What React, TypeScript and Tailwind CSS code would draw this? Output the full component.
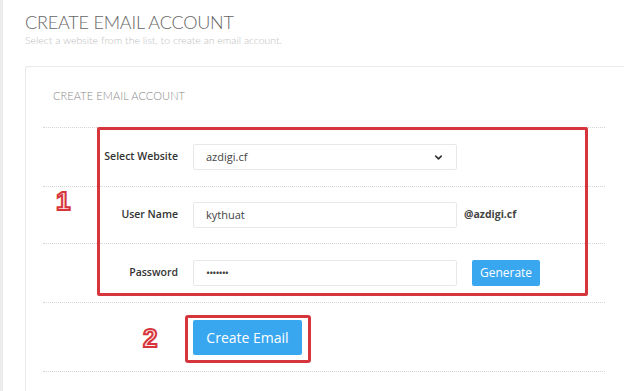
import { ChevronDown } from "lucide-react";

const label = "text-right text-[10.5px] font-semibold text-[#333] w-[150px] pr-[15px] shrink-0";
const input =
  "h-[26px] w-[264px] rounded-[2px] border border-[#e6e9ea] bg-white px-[12px] text-[11px] text-[#444] flex items-center";

function Num({ n }: { n: string }) {
  return (
    <span className="font-['Liberation_Sans',sans-serif] text-[26px] font-bold leading-none text-[#fde8e8] [-webkit-text-stroke:2px_#d6363b]">
      {n}
    </span>
  );
}

export default function App() {
  return (
    <div className="h-[391px] w-[624px] overflow-hidden border-l-[3px] border-[#ececec] bg-white font-['Open_Sans',sans-serif]">
      <div className="pl-[22px] pt-[11px]">
        <h1 className="font-['Lato',sans-serif] text-[18px] font-light leading-[22px] tracking-[-0.2px] text-[#666]">
          CREATE EMAIL ACCOUNT
        </h1>
        <p className="font-['Lato',sans-serif] text-[10.5px] font-light leading-[14px] text-[#bdbdbd]">
          Select a website from the list, to create an email account.
        </p>
      </div>

      <div className="relative ml-[22px] mt-[19px] w-[640px] rounded-tl-[3px] border-l border-t border-[#e9e9e9] pb-[30px]">
        <div className="pl-[27px] pt-[22px] font-['Lato',sans-serif] text-[11px] font-light leading-[13px] tracking-[0.1px] text-[#888]">
          CREATE EMAIL ACCOUNT
        </div>

        <div className="ml-[17px] mt-[25px] w-[562px]">
          <div className="flex h-[59px] items-center border-t border-dotted border-[#d4d4d4]">
            <div className={label}>Select Website</div>
            <div className={input + " justify-between"}>
              <span>azdigi.cf</span>
              <ChevronDown className="h-[11px] w-[11px] text-[#333]" strokeWidth={3.5} />
            </div>
          </div>
          <div className="flex h-[57px] items-center border-t border-dotted border-[#d4d4d4]">
            <div className={label}>User Name</div>
            <div className={input}>kythuat</div>
            <span className="ml-[7px] text-[10.5px] font-bold text-[#444]">@azdigi.cf</span>
          </div>
          <div className="flex h-[59px] items-center border-t border-dotted border-[#d4d4d4]">
            <div className={label}>Password</div>
            <div className={input + " tracking-[-1px]"}>•••••••</div>
            <button className="ml-[15px] h-[26px] w-[68px] rounded-[2px] bg-[#39a6f0] text-[12px] text-white">
              Generate
            </button>
          </div>
          <div className="flex h-[70px] items-center border-b border-t border-dotted border-[#d4d4d4]">
            <div className="w-[150px] shrink-0" />
            <button className="h-[35px] w-[109px] rounded-[2px] bg-[#39a6f0] text-[14px] text-white">
              Create Email
            </button>
          </div>
        </div>

        {/* annotations */}
        <div className="pointer-events-none absolute left-[71px] top-[60px] h-[169px] w-[491px] rounded-[2px] border-[3px] border-[#d6363b]" />
        <div className="absolute left-[30px] top-[121px]">
          <Num n="1" />
        </div>
        <div className="pointer-events-none absolute left-[159px] top-[248px] h-[48px] w-[126px] rounded-[3px] border-[3px] border-[#d6363b]" />
        <div className="absolute left-[117px] top-[258px]">
          <Num n="2" />
        </div>
      </div>
    </div>
  );
}
